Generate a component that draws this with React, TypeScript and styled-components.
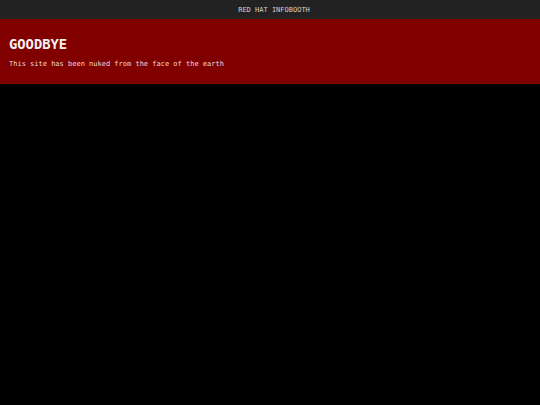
import React from 'react'
import styled, { createGlobalStyle } from 'styled-components'

const GlobalStyle = createGlobalStyle`
  html, body {
    margin: 0;
    padding: 0;
    background: #000;
    font-family: "DejaVu Sans Mono", "Liberation Mono", monospace;
  }
`

const Page = styled.div`
  display: flex;
  flex-direction: column;
  min-height: 405px;
  background: #000;
`

const TopBar = styled.div`
  height: 19px;
  display: flex;
  align-items: center;
  justify-content: center;
  padding-left: 8px;
  background: #222222;
  color: #d0d0d0;
  font-size: 7px;
`

const Banner = styled.div`
  background: #800000;
  padding: 17px 9px 16px;
  height: 65px;
  box-sizing: border-box;
`

const Title = styled.h1`
  margin: 0;
  color: #f2f2f2;
  font-size: 13.8px;
  font-weight: bold;
  line-height: 16px;
`

const Message = styled.p`
  margin: 7px 0 0;
  color: #f0d8d8;
  font-size: 7px;
  line-height: 10px;
`

export default function App() {
  return (
    <>
      <GlobalStyle />
      <Page>
        <TopBar>RED HAT INFOBOOTH</TopBar>
        <Banner>
          <Title>GOODBYE</Title>
          <Message>This site has been nuked from the face of the earth</Message>
        </Banner>
      </Page>
    </>
  )
}
